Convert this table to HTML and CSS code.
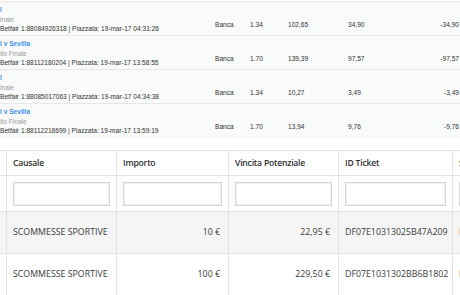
FILE: index.html
```html
<!DOCTYPE html>
<html lang="it">
<head>
<meta charset="utf-8">
<title>Scommesse</title>
<link rel="stylesheet" href="styles.css">
</head>
<body>
<div class="page">
  <div class="bets">
    <div class="bet">
      <div class="desc">
        <div class="ev">l</div>
        <div class="mk">inale</div>
        <div class="ref">Betfair 1:88084926318 | Piazzata: 19-mar-17 04:31:26</div>
      </div>
      <div class="num">Banca</div>
      <div class="num">1.34</div>
      <div class="num">102,65</div>
      <div class="num">34,90</div>
      <div class="num right">-34,90</div>
    </div>
    <div class="bet">
      <div class="desc">
        <div class="ev">l v Sevilla</div>
        <div class="mk">ito Finale</div>
        <div class="ref">Betfair 1:88112180204 | Piazzata: 19-mar-17 13:58:55</div>
      </div>
      <div class="num">Banca</div>
      <div class="num">1.70</div>
      <div class="num">139,39</div>
      <div class="num">97,57</div>
      <div class="num right">-97,57</div>
    </div>
    <div class="bet">
      <div class="desc">
        <div class="ev">l</div>
        <div class="mk">inale</div>
        <div class="ref">Betfair 1:88085017063 | Piazzata: 19-mar-17 04:34:38</div>
      </div>
      <div class="num">Banca</div>
      <div class="num">1.34</div>
      <div class="num">10,27</div>
      <div class="num">3,49</div>
      <div class="num right">-3,49</div>
    </div>
    <div class="bet">
      <div class="desc">
        <div class="ev">l v Sevilla</div>
        <div class="mk">ito Finale</div>
        <div class="ref">Betfair 1:88112218699 | Piazzata: 19-mar-17 13:59:19</div>
      </div>
      <div class="num">Banca</div>
      <div class="num">1.70</div>
      <div class="num">13,94</div>
      <div class="num">9,76</div>
      <div class="num right">-9,76</div>
    </div>
  </div>

  <div class="grid-wrap">
    <div class="grid">
      <div class="cell head"></div>
      <div class="cell head">Causale</div>
      <div class="cell head">Importo</div>
      <div class="cell head">Vincita Potenziale</div>
      <div class="cell head">ID Ticket</div>
      <div class="cell head last">Stato</div>

      <div class="cell filter"><input class="inp" type="text"></div>
      <div class="cell filter"><input class="inp" type="text"></div>
      <div class="cell filter"><input class="inp" type="text"></div>
      <div class="cell filter"><input class="inp" type="text"></div>
      <div class="cell filter"><input class="inp" type="text"></div>
      <div class="cell filter last"><input class="inp" type="text"></div>

      <div class="cell data odd"></div>
      <div class="cell data odd">SCOMMESSE SPORTIVE</div>
      <div class="cell data odd amount">10 €</div>
      <div class="cell data odd amount">22,95 €</div>
      <div class="cell data odd">DF07E10313025B47A209</div>
      <div class="cell data odd last">Perdente</div>

      <div class="cell data"></div>
      <div class="cell data">SCOMMESSE SPORTIVE</div>
      <div class="cell data amount">100 €</div>
      <div class="cell data amount">229,50 €</div>
      <div class="cell data">DF07E1031302BB6B1802</div>
      <div class="cell data last">Perdente</div>
    </div>
  </div>
</div>
</body>
</html>
```

FILE: styles.css
```css
html, body {
  margin: 0;
  padding: 0;
  background: #ffffff;
}
body {
  width: 460px;
  height: 295px;
  overflow: hidden;
}
.page {
  width: 460px;
  height: 295px;
  overflow: hidden;
}
.bets {
  margin-top: 1px;
  border-top: 1px solid #e6e6e6;
  font-family: "Liberation Sans", Arial, sans-serif;
  font-size: 6.6px;
  color: #333;
}
.bet {
  display: grid;
  grid-template-columns: 215px 35px 38px 60px 60px 1fr;
  background: #f9fafa;
  border-bottom: 1px solid #e8e8e8;
}
.bet:last-child {
  border-bottom-color: #f4f4f4;
}
.desc {
  padding: 3px 0 1.5px 0;
  line-height: 9.5px;
  white-space: nowrap;
}
.ev {
  color: #3d93e8;
  font-weight: bold;
}
.mk {
  color: #9a9a9a;
}
.ref {
  color: #333;
}
.num {
  padding-top: 17.5px;
  line-height: 9.5px;
  white-space: nowrap;
}
.right {
  text-align: right;
  padding-right: 1px;
}

.grid-wrap {
  margin-top: 12px;
  width: 460px;
  overflow: hidden;
}
.grid {
  display: grid;
  grid-template-columns: 60px 110px 112px 110px 114px 100px;
  margin-left: -53px;
  width: 606px;
  border-top: 1px solid #e3e3e3;
  font-family: "Open Sans", "Noto Sans", sans-serif;
}
.cell {
  box-sizing: border-box;
  border-right: 1px solid #e3e3e3;
  border-bottom: 1px solid #e3e3e3;
  padding: 0 6px;
  white-space: nowrap;
  overflow: hidden;
}
.cell.last {
  border-right: none;
}
.head {
  height: 25px;
  line-height: 24px;
  font-size: 8.6px;
  font-weight: 600;
  color: #2e2e2e;
  letter-spacing: -0.2px;
}
.filter {
  height: 36px;
  padding-top: 6px;
}
.inp {
  display: block;
  box-sizing: border-box;
  width: 100%;
  height: 24px;
  margin: 0;
  border: 1px solid #d6d6d6;
  box-shadow: inset 0 0 0 1px #f0f0f0;
  background: #fff;
  padding: 0;
  outline: none;
}
.data {
  height: 42px;
  line-height: 41px;
  font-size: 8.8px;
  color: #3a3a3a;
}
.data.odd {
  background: #f5f5f5;
}
.amount {
  text-align: right;
  padding-right: 8px;
}
```
